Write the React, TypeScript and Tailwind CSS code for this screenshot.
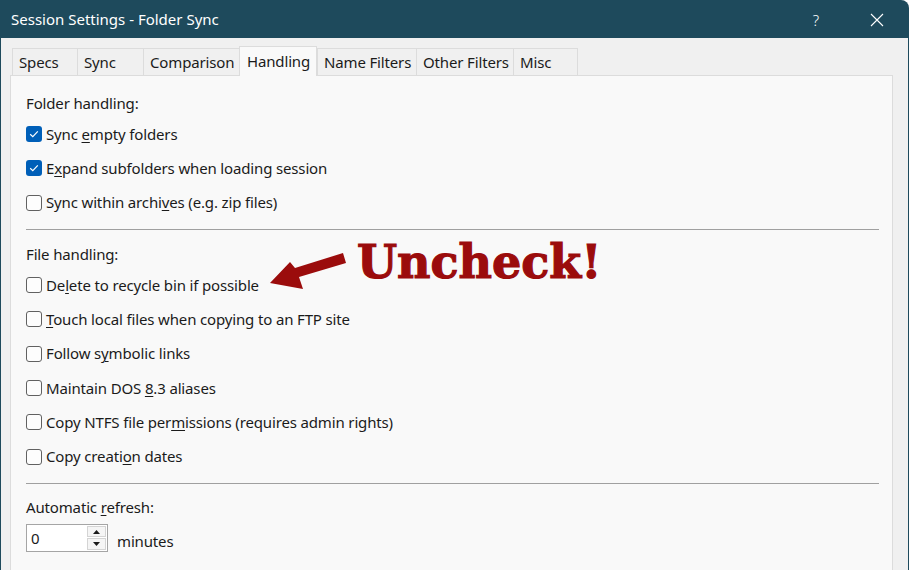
import React from "react";

const font = { fontFamily: '"Noto Sans", "Open Sans", sans-serif' };

type Item = { before: string; key: string; after: string; checked?: boolean };

const folderItems: Item[] = [
  { before: "Sync ", key: "e", after: "mpty folders", checked: true },
  { before: "E", key: "x", after: "pand subfolders when loading session", checked: true },
  { before: "Sync within archi", key: "v", after: "es (e.g. zip files)" },
];

const fileItems: Item[] = [
  { before: "De", key: "l", after: "ete to recycle bin if possible" },
  { before: "", key: "T", after: "ouch local files when copying to an FTP site" },
  { before: "Follow s", key: "y", after: "mbolic links" },
  { before: "Maintain DOS ", key: "8", after: ".3 aliases" },
  { before: "Copy NTFS file per", key: "m", after: "issions (requires admin rights)" },
  { before: "Copy creati", key: "o", after: "n dates" },
];

const tabs = [
  { label: "Specs", w: "w-[65px]" },
  { label: "Sync", w: "w-[66px]" },
  { label: "Comparison", w: "w-[96px]" },
  { label: "Handling", w: "w-[78px]", active: true },
  { label: "Name Filters", w: "w-[99px]" },
  { label: "Other Filters", w: "w-[97px]" },
  { label: "Misc", w: "w-[65px]" },
];

const CheckRow = ({ item }: { item: Item }) => (
  <div className="flex items-center h-[34.3px]">
    {item.checked ? (
      <div className="w-4 h-4 rounded-[3px] bg-[#005fb8] flex items-center justify-center">
        <svg width="10" height="8" viewBox="0 0 10 8" fill="none">
          <path d="M1.2 4.2 L3.8 6.6 L8.8 1.4" stroke="white" strokeWidth="1.2" />
        </svg>
      </div>
    ) : (
      <div className="w-4 h-4 rounded-[3px] border border-[#616161] bg-[#fdfdfd]" />
    )}
    <span className="ml-[4px] text-[15px] tracking-[-0.15px] text-[#1b1b1b]">
      {item.before}
      <span className="underline underline-offset-2 decoration-1">{item.key}</span>
      {item.after}
    </span>
  </div>
);

const Label = ({ children }: { children: React.ReactNode }) => (
  <div className="h-5 flex items-center text-[15px] tracking-[-0.15px] text-[#1b1b1b]">{children}</div>
);

export default function App() {
  return (
    <div className="w-[909px] h-[570px] overflow-hidden bg-white" style={font}>
      <div className="h-full flex flex-col bg-[#1e4a5c] rounded-tr-[8px] px-px">
        {/* title bar */}
        <div className="h-[38px] shrink-0 flex items-center pl-[10px] text-white">
          <span className="text-[15px]">Session Settings - Folder Sync</span>
          <span className="ml-auto mr-[51px] mt-[2px] text-[15px] font-light">?</span>
          <svg className="mr-[24px] mt-[2px]" width="14" height="14" viewBox="0 0 14 14">
            <path d="M1 1 L13 13 M13 1 L1 13" stroke="white" strokeWidth="1.1" />
          </svg>
        </div>

        {/* body */}
        <div className="flex-1 bg-[#f0f0f0] pl-[9px] pr-[15px] pt-[9px] flex flex-col">
          <div className="flex items-end h-[28px] pl-[2px]">
            {tabs.map((t) =>
              t.active ? (
                <div
                  key={t.label}
                  className={`${t.w} h-[30px] -mb-px relative z-10 bg-[#f9f9f9] border border-b-0 border-[#dcdcdc] pl-[7px] flex items-center text-[15px] tracking-[-0.15px] text-[#1b1b1b]`}
                >
                  {t.label}
                </div>
              ) : (
                <div
                  key={t.label}
                  className={`${t.w} h-[27px] bg-[#f0f0f0] border border-b-0 border-r-0 last:border-r border-[#dcdcdc] pl-[6px] flex items-center text-[15px] tracking-[-0.15px] text-[#1b1b1b]`}
                >
                  {t.label}
                </div>
              )
            )}
          </div>

          <div className="flex-1 bg-[#f9f9f9] border border-b-0 border-[#dcdcdc] pl-[15px] pr-[13px] pt-[17px]">
            <Label>Folder handling:</Label>
            <div className="mt-[4px]">
              {folderItems.map((it) => (
                <CheckRow key={it.key + it.before} item={it} />
              ))}
            </div>
            <div className="mt-[9px] h-px bg-[#a0a0a0]" />

            <div className="mt-[14px] relative">
              <Label>File handling:</Label>
              {/* annotation */}
              <svg
                className="absolute left-[239px] top-[6px]"
                width="85"
                height="42"
                viewBox="0 0 85 42"
              >
                <path d="M5 33 L25 12 L30 18 L78 3 L81 13 L34 27 L38 39 Z" fill="#9b0c0c" />
              </svg>
              <span
                className="absolute left-[331px] top-[-5px] text-[46px] leading-none font-bold text-[#9b0c0c] whitespace-nowrap [-webkit-text-stroke:1.2px_#9b0c0c]"
                style={{ fontFamily: '"DejaVu Serif", serif' }}
              >
                Uncheck!
              </span>
            </div>
            <div className="mt-[4px]">
              {fileItems.map((it) => (
                <CheckRow key={it.key + it.before} item={it} />
              ))}
            </div>
            <div className="mt-[9px] h-px bg-[#a0a0a0]" />

            <div className="mt-[14px]">
              <Label>
                <span>
                  Automatic <span className="underline underline-offset-2 decoration-1">r</span>efresh:
                </span>
              </Label>
            </div>
            <div className="mt-[6px] flex items-center">
              <div className="w-[82px] h-[28px] border border-[#a5a5a5] bg-white flex items-center">
                <span className="pl-[4px] flex-1 text-[15px] text-[#1b1b1b]">0</span>
                <div className="w-[20px] h-full flex flex-col py-px pr-px gap-px">
                  <div className="flex-1 border border-[#d4d4d4] bg-[#f5f5f5] flex items-center justify-center">
                    <svg width="7" height="4" viewBox="0 0 7 4">
                      <path d="M0 4 L3.5 0 L7 4 Z" fill="#1b1b1b" />
                    </svg>
                  </div>
                  <div className="flex-1 border border-[#d4d4d4] bg-[#f5f5f5] flex items-center justify-center">
                    <svg width="7" height="4" viewBox="0 0 7 4">
                      <path d="M0 0 L7 0 L3.5 4 Z" fill="#1b1b1b" />
                    </svg>
                  </div>
                </div>
              </div>
              <span className="ml-[9px] mt-[6px] text-[15px] tracking-[-0.15px] text-[#1b1b1b]">minutes</span>
            </div>
          </div>
        </div>
      </div>
    </div>
  );
}
